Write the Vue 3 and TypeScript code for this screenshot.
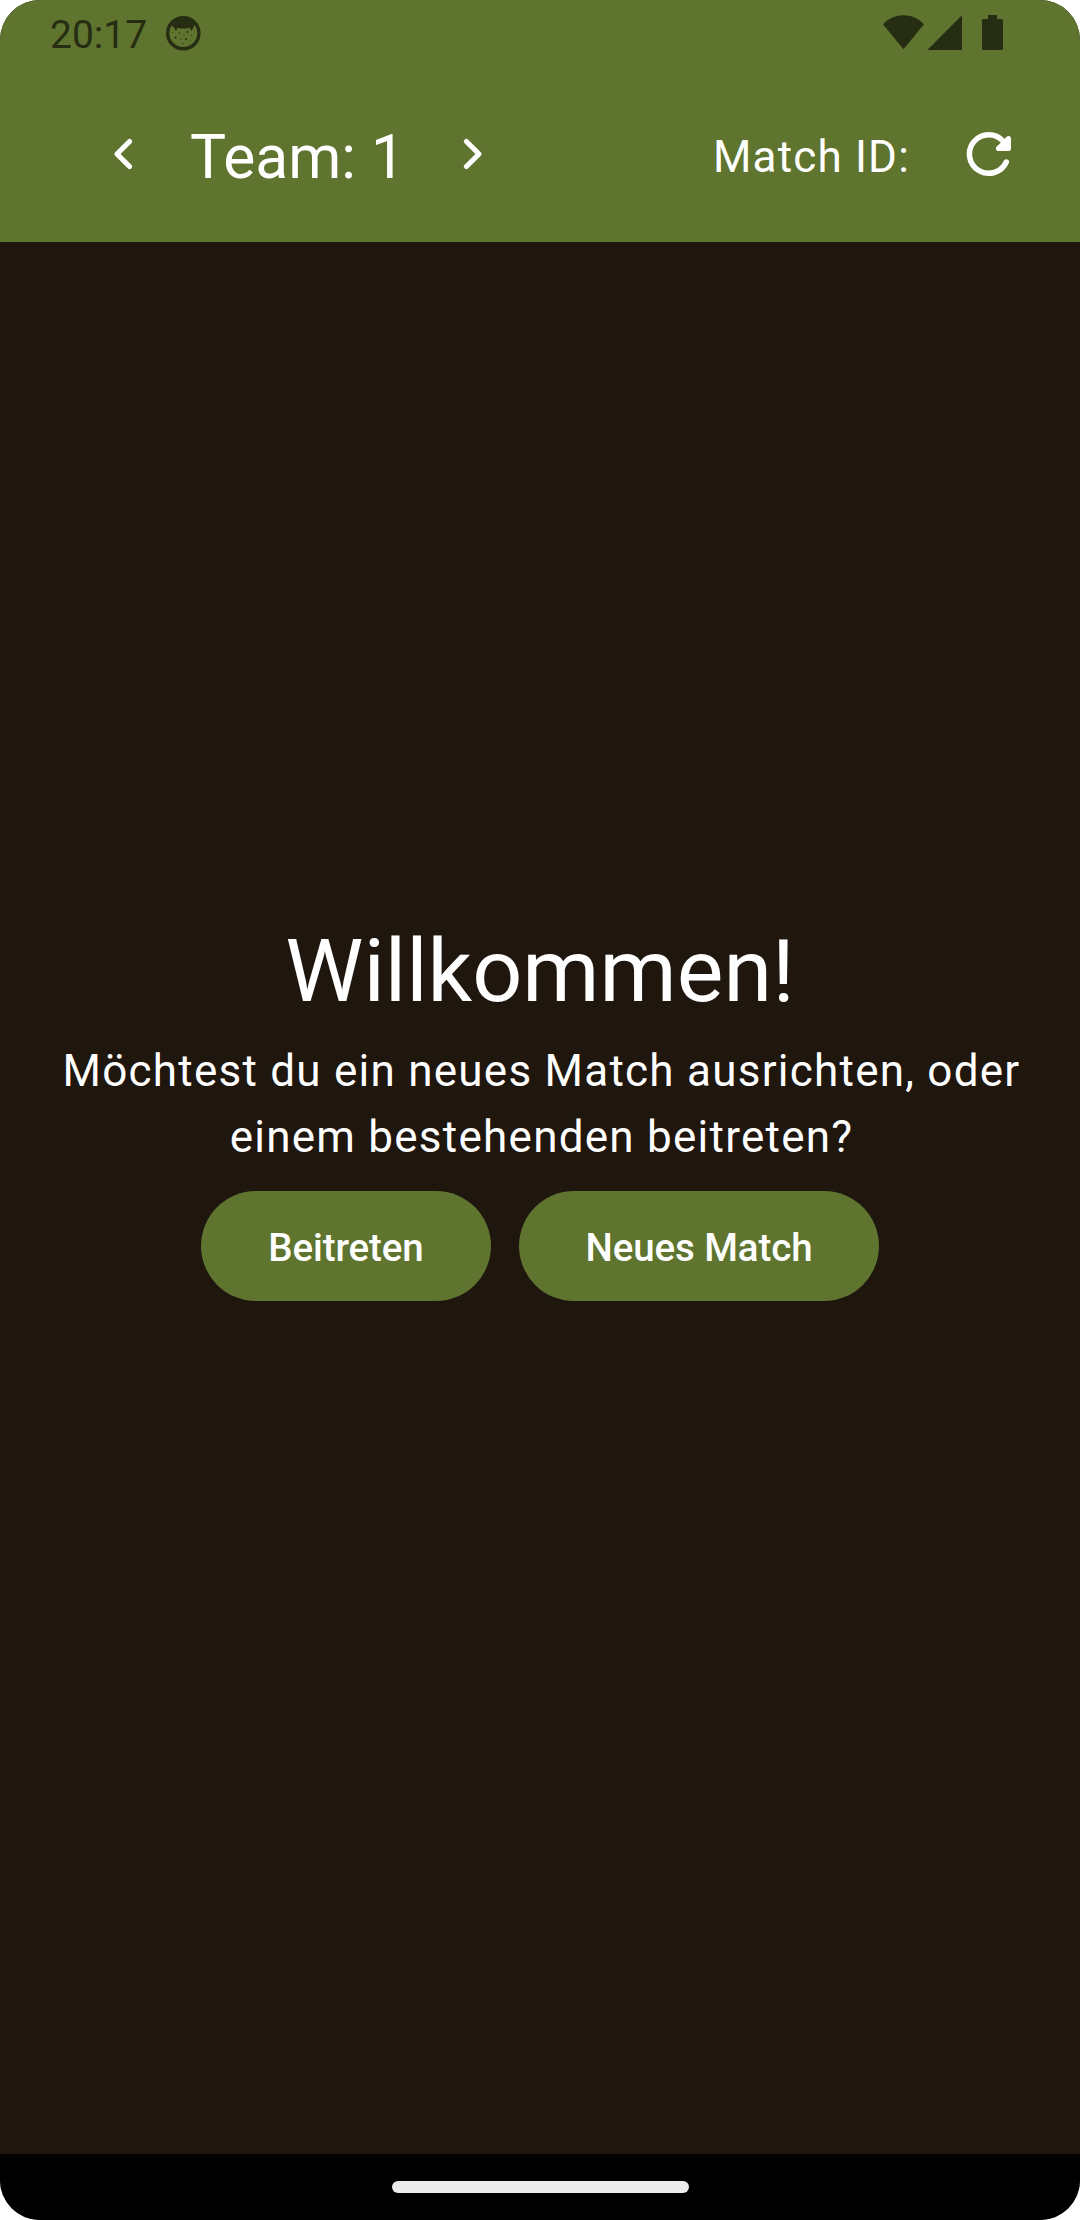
<script setup lang="ts">
import { ref } from 'vue'

const team = ref<number>(1)

function previousTeam(): void {
  team.value = Math.max(1, team.value - 1)
}

function nextTeam(): void {
  team.value += 1
}
</script>

<template>
  <div class="screen">
    <header class="top">
      <div class="status">
        <span class="clock">20:17</span>
        <svg class="notice" width="36" height="36" viewBox="0 0 36 36">
          <circle cx="18.300" cy="18.200" r="15.600" fill="none" stroke="currentColor" stroke-width="3.400" />
          <path d="M6.500 8.500C11 2 25.500 2 30 8.500L28.500 12.500L26.500 16L24.500 12.500L22 13.500H14.500L12.500 12.500L11 16L9 12.500L6 10Z" fill="currentColor" />
          <g fill="currentColor">
            <circle cx="22.500" cy="17" r="1" />
            <circle cx="10.500" cy="22.500" r="1" />
            <circle cx="21" cy="24" r="1" />
            <circle cx="14.500" cy="18" r=".7" />
            <circle cx="16" cy="24" r=".6" />
            <circle cx="19" cy="20" r=".5" />
            <circle cx="26.500" cy="20.500" r=".6" />
            <circle cx="25.500" cy="25" r=".5" />
            <circle cx="18" cy="28.500" r=".6" />
            <circle cx="8" cy="17.500" r=".5" />
          </g>
        </svg>
        <svg class="signals" width="122" height="36" viewBox="0 0 122 36" fill="currentColor">
          <path d="M0 9.300C11-2.800 30-2.800 41 9.300L20.500 34.300Z" />
          <path d="M44.300 35H79V.300Z" />
          <path d="M105 0h9v4h4.500q1.500 0 1.500 1.500v28q0 1.500-1.500 1.500h-18q-1.500 0-1.500-1.500v-28q0-1.500 1.500-1.500h4.500Z" />
        </svg>
      </div>
      <div class="toolbar">
        <button class="icon-button previous" aria-label="Vorheriges Team" @click="previousTeam">
          <svg width="24" height="36" viewBox="0 0 24 36"><path d="M18.600 5.500L6 18L18.600 30.500" /></svg>
        </button>
        <h1 class="team">Team: {{ team }}</h1>
        <button class="icon-button" aria-label="Nächstes Team" @click="nextTeam">
          <svg width="24" height="36" viewBox="0 0 24 36"><path d="M5.400 5.500L18 18L5.400 30.500" /></svg>
        </button>
        <span class="match-id">Match ID:</span>
        <button class="reload" aria-label="Aktualisieren">
          <svg width="48" height="48" viewBox="0 0 48 48">
            <path class="arc" d="M37.200 11.200A19.300 19.300 0 1 0 40.300 32" />
            <path class="head" d="M45 8.500V18.500Q45 21 42.500 21H32.500C29.800 21 29 18.300 30.800 16.500L40.700 6.800C42.500 5 45 6 45 8.500Z" />
          </svg>
        </button>
      </div>
    </header>

    <main class="content">
      <h2>Willkommen!</h2>
      <p>Möchtest du ein neues Match ausrichten, oder einem bestehenden beitreten?</p>
      <div class="actions">
        <button class="pill join">Beitreten</button>
        <button class="pill create">Neues Match</button>
      </div>
    </main>

    <footer class="nav"><span class="handle"></span></footer>
  </div>
</template>

<style>
body {
  margin: 0;
  background: #fff;
}
</style>

<style scoped>
.screen {
  width: 1080px;
  height: 2220px;
  display: flex;
  flex-direction: column;
  overflow: hidden;
  border-radius: 40px;
  background: #1f160e;
  color: #fff;
  font-family: Roboto, sans-serif;
}

button {
  border: 0;
  padding: 0;
  background: none;
  color: inherit;
  font: inherit;
}

svg {
  display: block;
}

.top {
  height: 242px;
  flex: none;
  display: flex;
  flex-direction: column;
  background: #5f742e;
}

.status {
  height: 66px;
  box-sizing: border-box;
  padding: 0 75px 0 50px;
  display: flex;
  align-items: flex-start;
  color: #262d13;
}

.clock {
  margin-top: 12px;
  font-size: 39px;
  line-height: 46px;
  width: 97px;
  white-space: nowrap;
}

.notice {
  margin: 15px 0 0 18px;
}

.signals {
  margin: 15px 0 0 auto;
}

.toolbar {
  height: 176px;
  display: flex;
  align-items: flex-start;
}

.icon-button {
  margin-top: 70px;
}

.previous {
  margin-left: 111px;
}

.icon-button path {
  fill: none;
  stroke: #fff;
  stroke-width: 5.200;
  stroke-linecap: round;
  stroke-linejoin: round;
}

.team {
  margin: 54px 0 0 55px;
  width: 271px;
  font-size: 60.500px;
  line-height: 76px;
  font-weight: 400;
  white-space: nowrap;
}

.match-id {
  margin: 58px 0 0 auto;
  font-size: 44px;
  line-height: 66px;
  letter-spacing: 1.180px;
}

.reload {
  margin: 64px 66px 0 56px;
}

.arc {
  fill: none;
  stroke: #fff;
  stroke-width: 5.500;
  stroke-linecap: round;
}

.head {
  fill: #fff;
}

.content {
  flex: 1;
  display: flex;
  flex-direction: column;
  align-items: center;
  padding: 674px 55px 0;
}

h2 {
  margin: 0;
  font-size: 88px;
  line-height: 110px;
  font-weight: 400;
}

p {
  margin: 12px 0 21px;
  padding-left: 3px;
  width: 967px;
  font-size: 44px;
  line-height: 66px;
  letter-spacing: 1.250px;
  text-align: center;
}

.actions {
  display: flex;
  gap: 28px;
}

.pill {
  height: 110px;
  padding-top: 3px;
  border-radius: 55px;
  background: #5f742e;
  font-size: 38.500px;
  line-height: 55px;
  font-weight: 500;
  letter-spacing: -0.100px;
}

.join {
  width: 290px;
}

.create {
  width: 360px;
}

.nav {
  height: 66px;
  flex: none;
  display: flex;
  justify-content: center;
  align-items: flex-start;
  background: #000;
}

.handle {
  width: 297px;
  height: 12px;
  margin-top: 27px;
  border-radius: 6px;
  background: #ebebeb;
}
</style>
